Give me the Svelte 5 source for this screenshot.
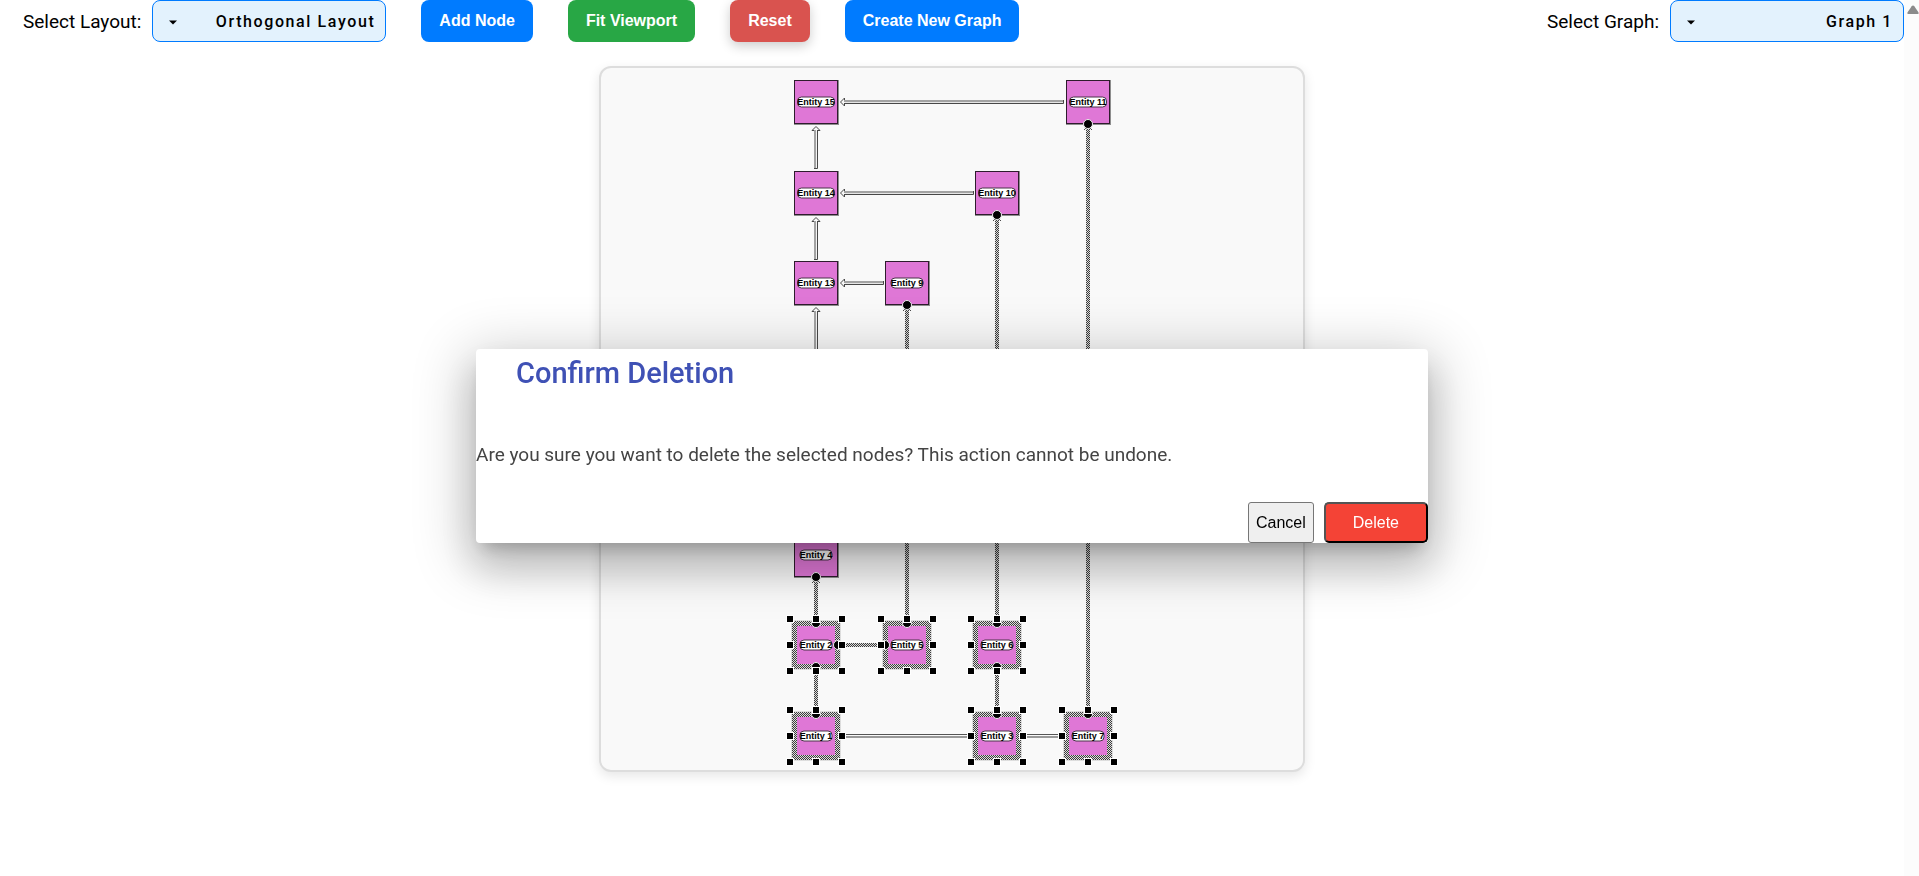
<script>
  const COL = [816, 907, 997, 1088];
  const ROW = [102, 193, 283, 374, 464, 555, 645, 736];
  const SIZE = 44;
  const HALF = SIZE / 2;
  const REACH = 26;

  let layout = $state('Orthogonal Layout');
  let graph = $state('Graph 1');

  const nodes = [
    { n: 15, c: 0, r: 0 },
    { n: 11, c: 3, r: 0, ports: ['b'] },
    { n: 14, c: 0, r: 1 },
    { n: 10, c: 2, r: 1, ports: ['b'] },
    { n: 13, c: 0, r: 2 },
    { n: 9, c: 1, r: 2, ports: ['b'] },
    { n: 4, c: 0, r: 5, ports: ['b'] },
    { n: 2, c: 0, r: 6, sel: true, ports: ['t', 'r', 'b'] },
    { n: 5, c: 1, r: 6, sel: true, ports: ['t', 'l'] },
    { n: 6, c: 2, r: 6, sel: true, ports: ['t', 'b'] },
    { n: 1, c: 0, r: 7, sel: true, ports: ['t'] },
    { n: 3, c: 2, r: 7, sel: true, ports: ['t'] },
    { n: 7, c: 3, r: 7, sel: true, ports: ['t'] }
  ].map((d) => ({ ports: [], ...d, x: COL[d.c], y: ROW[d.r] }));

  const portAt = {
    t: [0, -HALF], b: [0, HALF], l: [-HALF, 0], r: [HALF, 0]
  };
  const handles = [
    [-1, -1], [0, -1], [1, -1], [-1, 0], [1, 0], [-1, 1], [0, 1], [1, 1]
  ];

  // Hollow edges: [x, y, length]
  const left = [
    [COL[0] + 24, ROW[0], 224],
    [COL[0] + 24, ROW[1], 134],
    [COL[0] + 24, ROW[2], 44]
  ];
  const up = [
    [COL[0], ROW[0] + 24, 43],
    [COL[0], ROW[1] + 24, 43],
    [COL[0], ROW[2] + 24, 60]
  ];
  // Selected edges: [column, top, bottom, has arrow]
  const meshed = [
    [COL[3], ROW[0] + 24, ROW[7] - 26, true],
    [COL[2], ROW[1] + 24, ROW[6] - 26, true],
    [COL[1], ROW[2] + 24, ROW[6] - 26, true],
    [COL[0], ROW[5] + 24, ROW[6] - 26, true],
    [COL[0], ROW[6] + 26, ROW[7] - 26, false],
    [COL[2], ROW[6] + 26, ROW[7] - 26, false]
  ];
</script>

<div class="page">
  <div class="content">
    <header class="toolbar">
      <div class="field">
        <label for="layout">Select Layout:</label>
        <select id="layout" bind:value={layout}>
          <option>Orthogonal Layout</option>
          <option>Organic Layout</option>
        </select>
      </div>
      <button class="btn blue">Add Node</button>
      <button class="btn green">Fit Viewport</button>
      <button class="btn red">Reset</button>
      <button class="btn blue">Create New Graph</button>
      <div class="field last">
        <label for="graph">Select Graph:</label>
        <select id="graph" bind:value={graph}>
          <option>Graph 1</option>
          <option>Graph 2</option>
        </select>
      </div>
    </header>

    <main class="graph">
      <svg viewBox="601 68 702 702" aria-label="Entity graph">
        <defs>
          <pattern id="mesh" width="2" height="2" patternUnits="userSpaceOnUse">
            <rect width="2" height="2" fill="#dcdcdc" />
            <rect width="1" height="1" fill="#3c3c3c" />
            <rect x="1" y="1" width="1" height="1" fill="#3c3c3c" />
          </pattern>
        </defs>

        {#each left as [x, y, len]}
          <g transform="translate({x} {y})">
            <path d="M5 -2H{len}V2H5" fill="#e6e6e6" />
            <path d="M4 -1H{len}" stroke="#a3a3a3" stroke-width="2" />
            <path d="M4 1.5H{len - 0.5}V-2" class="line" />
            <path d="M4.5 -4L0.5 0L4.5 4V2M4.5 -4V-2" class="line" />
          </g>
        {/each}

        {#each up as [x, y, len]}
          <g transform="translate({x} {y})">
            <path d="M-2 5V{len}H2V5" fill="#f4f4f4" />
            <path d="M-1 4V{len}" stroke="#a3a3a3" stroke-width="2" />
            <path d="M1.5 4V{len - 0.5}H-2" class="line" />
            <path d="M-4 4.5L0 0.5L4 4.5H2M-4 4.5H-2" class="line" />
          </g>
        {/each}

        {#each [[843, 968], [1024, 1061]] as [a, b]}
          <path d="M{a} {ROW[7] - 1.5}H{b}" stroke="#555" />
          <path d="M{a} {ROW[7] + 1}H{b}" stroke="#999" stroke-width="2" />
        {/each}

        {#each meshed as [x, top, bottom, arrow]}
          <rect x={x - 2} y={top} width="4" height={bottom - top} fill="url(#mesh)" />
          {#if arrow}
            <path d="M{x - 4} {top + 4}L{x} {top}L{x + 4} {top + 4}" class="line" />
          {/if}
        {/each}
        <rect x="842" y={ROW[6] - 2} width="40" height="4" fill="url(#mesh)" />

        {#each nodes as d}
          {@const w = d.n > 9 ? 37 : 32}
          <rect x={d.x - 22} y={d.y - 22} width="45" height="45" fill="#8e8e8e" />
          <rect x={d.x - 21.5} y={d.y - 21.5} width="43" height="43" fill="#df77d6" stroke="#2e1c2d" />
          {#if d.sel}
            <rect x={d.x - 24.5} y={d.y - 24.5} width="49" height="49" fill="none" stroke="#ddd" />
            <path
              d="M{d.x - 24} {d.y - 24}h48v48h-48zM{d.x - 19} {d.y - 19}v38h38v-38z"
              fill="url(#mesh)"
            />
          {/if}
          {#each d.ports as p}
            <circle cx={d.x + portAt[p][0]} cy={d.y + portAt[p][1]} r="4.5" class="port" />
          {/each}
          <rect x={d.x - w / 2} y={d.y - 5} width={w} height="10" rx="4" fill="#fff" stroke="#4a3448" />
          <text x={d.x} y={d.y + 3}>Entity {d.n}</text>
        {/each}

        {#each nodes.filter((d) => d.sel) as d}
          {#each handles as [hx, hy]}
            <rect x={d.x + hx * REACH - 4} y={d.y + hy * REACH - 4} width="8" height="8" fill="#fff" />
            <rect x={d.x + hx * REACH - 3} y={d.y + hy * REACH - 3} width="6" height="6" />
          {/each}
        {/each}
      </svg>
    </main>
  </div>

  <div class="scroll" aria-hidden="true">
    <svg width="12" height="9" viewBox="0 0 12 9">
      <path d="M6 0.5C6.6 0.5 7 0.9 7.3 1.3L11.4 7.2C12 8.2 11.5 9 10.6 9H1.4C0.5 9 0 8.2 0.6 7.2L4.7 1.3C5 0.9 5.4 0.5 6 0.5Z" fill="#8b8b8b" />
    </svg>
  </div>
</div>

<div class="overlay">
  <div class="dialog" role="dialog" aria-modal="true" aria-labelledby="dialog-title">
    <h2 id="dialog-title">Confirm Deletion</h2>
    <p>Are you sure you want to delete the selected nodes? This action cannot be undone.</p>
    <div class="actions">
      <button class="cancel">Cancel</button>
      <button class="delete">Delete</button>
    </div>
  </div>
</div>

<style>
  :global(body) {
    margin: 0;
    background: #fff;
    font-family: Roboto, sans-serif;
  }
  .page {
    display: flex;
    min-height: 100vh;
  }
  .content {
    flex: 1;
    display: flex;
    flex-direction: column;
  }
  .scroll {
    width: 15px;
    box-sizing: border-box;
    padding: 5px 0 0 3px;
    background: #fcfcfc;
  }
  .scroll svg {
    display: block;
  }
  .toolbar {
    display: flex;
    align-items: center;
    gap: 35px;
    height: 42px;
    padding-left: 23px;
  }
  .field {
    display: flex;
    align-items: center;
    gap: 11px;
    font-size: 19px;
  }
  .last {
    margin-left: auto;
  }
  select {
    appearance: none;
    box-sizing: border-box;
    width: 234px;
    height: 42px;
    padding: 0 10px 0 36px;
    border: 1px solid #007bff;
    border-radius: 8px;
    background: #e3f2fd
      url("data:image/svg+xml,%3Csvg xmlns='http://www.w3.org/2000/svg' width='8' height='5'%3E%3Cpath d='M0 0.5H8L4 4.5Z'/%3E%3C/svg%3E")
      no-repeat 16px 19px;
    color: #000;
    font: 500 16px Roboto, sans-serif;
    letter-spacing: 0.1em;
    text-align: right;
    text-align-last: right;
  }
  .btn {
    height: 42px;
    padding: 0 18px;
    border: 0;
    border-radius: 8px;
    color: #fff;
    font: bold 16px "Liberation Sans", Arial, sans-serif;
  }
  .blue {
    background: #007bff;
  }
  .green {
    background: #28a745;
  }
  .red {
    background: #d9534f;
    box-shadow: 0 4px 12px rgba(0, 0, 0, 0.2);
  }
  .graph {
    align-self: center;
    box-sizing: border-box;
    width: 706px;
    margin-top: 24px;
    border: 2px solid #ddd;
    border-radius: 12px;
    background: #f9f9f9;
    box-shadow: 0 4px 12px rgba(0, 0, 0, 0.1);
  }
  .graph svg {
    display: block;
    width: 100%;
  }
  .line {
    fill: none;
    stroke: #484848;
  }
  .port {
    fill: #000;
    stroke: #eee;
  }
  text {
    font: bold 9px "Liberation Sans", Arial, sans-serif;
    text-anchor: middle;
  }
  .overlay {
    position: fixed;
    inset: 0 15px 0 0;
    display: flex;
    align-items: center;
    justify-content: center;
  }
  .dialog {
    width: 50%;
    margin-bottom: -16px;
    border-radius: 4px;
    background: #fff;
    box-shadow:
      0 11px 15px -7px rgba(0, 0, 0, 0.2),
      0 24px 38px 3px rgba(0, 0, 0, 0.14),
      0 12px 56px 10px rgba(0, 0, 0, 0.2);
  }
  h2 {
    margin: 0;
    padding: 5px 40px 0;
    color: #3f51b5;
    font-size: 29px;
    font-weight: 500;
    line-height: 38px;
  }
  p {
    margin: 49px 0 33px;
    color: #444;
    font-size: 19px;
    line-height: 28px;
  }
  .actions {
    display: flex;
    justify-content: flex-end;
    gap: 10px;
  }
  .actions button {
    height: 41px;
    font: 16px "Liberation Sans", Arial, sans-serif;
  }
  .cancel {
    padding: 0 7px;
    border: 1px solid #767676;
    border-radius: 3px;
    background: #efefef;
    color: #000;
  }
  .delete {
    padding: 0 27px;
    border: 2px outset #000;
    border-radius: 5px;
    background: #f44336;
    color: #fff;
  }
</style>
